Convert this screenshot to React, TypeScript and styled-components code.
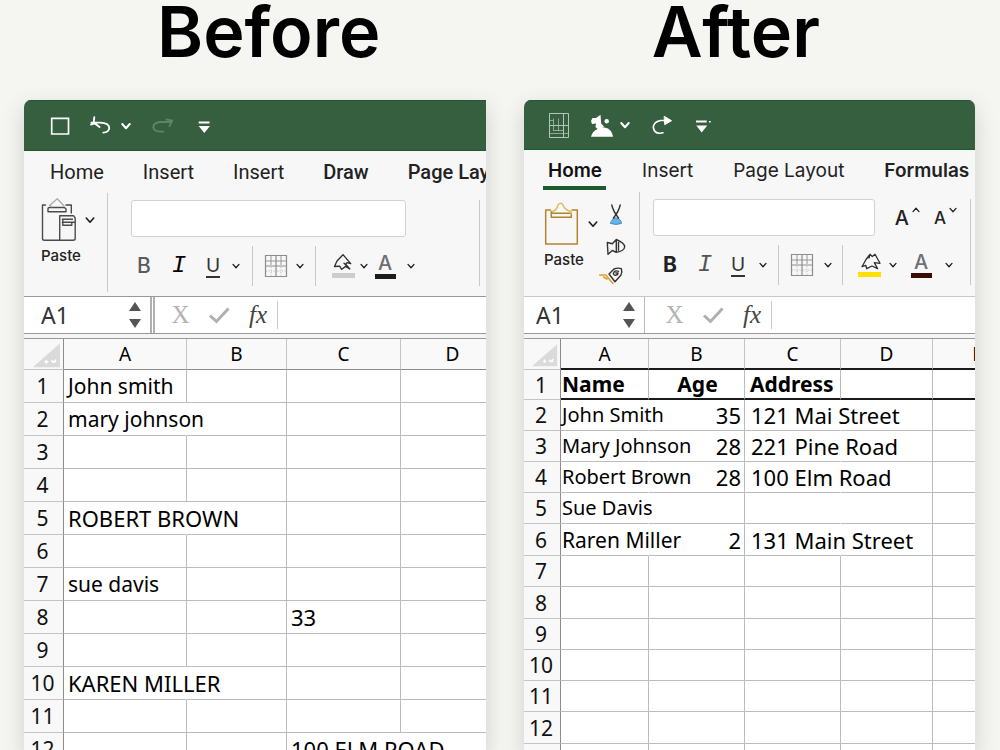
import React from "react";
import styled, { createGlobalStyle, css } from "styled-components";

const UI_FONT = `Inter, Roboto, "Liberation Sans", sans-serif`;
const CELL_FONT = `"Noto Sans", "Open Sans", sans-serif`;

const GlobalStyle = createGlobalStyle`
  *, *::before, *::after { box-sizing: border-box; }
  body { margin: 0; background: #f5f5f2; }
  button, input { font: inherit; color: inherit; margin: 0; padding: 0; border: 0; background: none; border-radius: 0; }
  svg { display: block; overflow: visible; }
`;

const Page = styled.main`
  height: 100vh;
  overflow: hidden;
  display: flex;
  flex-direction: column;
  background: #f5f5f2;
  font-family: ${UI_FONT};
  color: #1c1c1c;
`;

const Titles = styled.header`
  display: flex;
  justify-content: space-between;
  height: 100px;
  padding: 0 180px 0 157px;
`;

const Title = styled.h1`
  margin: 0;
  font-size: 70px;
  line-height: 64px;
  font-weight: 600;
  color: #000;
`;

const Panels = styled.div`
  flex: 1;
  min-height: 0;
  display: grid;
  grid-template-columns: 462fr 451fr;
  gap: 38px;
  padding: 0 25px 0 24px;
`;

const Window = styled.section<{ $cut?: boolean }>`
  min-width: 0;
  overflow: hidden;
  display: flex;
  flex-direction: column;
  background: #f5f5f5;
  border-radius: ${(p) => (p.$cut ? "7px 0 0 0" : "7px 7px 0 0")};
  box-shadow: 0 8px 22px rgba(60, 60, 50, 0.2);
`;

const QuickBar = styled.div<{ $cols: string; $pad: number; $h: number }>`
  flex: none;
  height: ${(p) => p.$h}px;
  display: grid;
  grid-template-columns: ${(p) => p.$cols};
  align-items: center;
  padding-left: ${(p) => p.$pad}px;
  background: #365f3f;
  border-top: 1px solid #1f5a2f;
  border-bottom: 1px solid #1f5a2f;
  color: #fff;
`;

const IconButton = styled.button`
  display: flex;
  align-items: center;
  cursor: pointer;
`;

const Ribbon = styled.div<{ $h: number }>`
  flex: none;
  height: ${(p) => p.$h}px;
  display: flex;
  flex-direction: column;
  background: #f7f7f7;
`;

const Tabs = styled.nav<{ $pad: number; $gap: number; $classic?: boolean }>`
  display: flex;
  gap: ${(p) => p.$gap}px;
  height: 42px;
  padding-left: ${(p) => p.$pad}px;
  white-space: nowrap;
  font-size: 19px;
  ${(p) => p.$classic && css`font-family: Roboto, sans-serif; font-size: 20px;`}
`;

const Tab = styled.a<{ $weight?: number; $active?: boolean }>`
  position: relative;
  line-height: 42px;
  font-weight: ${(p) => p.$weight ?? 400};
  color: #222;
  text-decoration: none;
  ${(p) =>
    p.$active &&
    css`
      color: #111;
      &::after {
        content: "";
        position: absolute;
        left: -5px;
        right: -4px;
        top: 36px;
        height: 4px;
        background: #1d5a2e;
      }
    `}
`;

const Groups = styled.div`
  flex: 1;
  display: flex;
`;

const Clipboard = styled.div<{ $w: number; $h: number }>`
  flex: none;
  width: ${(p) => p.$w}px;
  height: ${(p) => p.$h}px;
  display: flex;
  border-right: 1px solid #c9c9c9;
`;

const Paste = styled.div<{ $pad: number; $top: number }>`
  display: grid;
  grid-template-columns: 44px 10px;
  align-content: start;
  align-items: center;
  row-gap: 4px;
  padding: ${(p) => p.$top}px 0 0 ${(p) => p.$pad}px;
`;

const PasteLabel = styled.span`
  font-size: 15px;
  line-height: 20px;
  font-weight: 500;
  color: #222;
`;

const SideTools = styled.div`
  display: flex;
  flex-direction: column;
  align-items: center;
  gap: 12px;
  width: 36px;
  padding-top: 12px;
`;

const FontGroup = styled.div<{ $pad: number; $edge: number }>`
  flex: 1;
  min-width: 0;
  height: 86px;
  margin: 7px ${(p) => p.$edge}px 0 0;
  padding-left: ${(p) => p.$pad}px;
  border-right: 1px solid #c9c9c9;
`;

const FontRow = styled.div<{ $end: number }>`
  display: flex;
  align-items: center;
  height: 37px;
  padding-right: ${(p) => p.$end}px;
`;

const FontInput = styled.input`
  flex: 1;
  min-width: 0;
  height: 37px;
  background: #fff;
  border: 1px solid #d2d2d2;
  border-radius: 3px;
`;

const SizeButton = styled.button<{ $size: number; $gap: number }>`
  display: flex;
  align-items: flex-start;
  gap: 3px;
  margin-left: ${(p) => p.$gap}px;
  font-size: ${(p) => p.$size}px;
  line-height: 24px;
  font-weight: 500;
  color: #222;
`;

const ToolRow = styled.div<{ $cols: string }>`
  display: grid;
  grid-template-columns: ${(p) => p.$cols};
  justify-items: center;
  align-items: center;
  height: 40px;
  margin-top: 9px;
`;

const Tool = styled.button<{ $weight?: number; $italic?: boolean; $underline?: boolean; $color?: string }>`
  display: flex;
  justify-content: center;
  font-size: 21px;
  line-height: 22px;
  font-weight: ${(p) => p.$weight ?? 400};
  color: ${(p) => p.$color ?? "#333"};
  ${(p) => p.$italic && css`font-family: "Liberation Mono", monospace; font-style: italic; font-size: 24px;`}
  ${(p) => p.$underline && css`font-size: 19px; line-height: 21px; border-bottom: 2px solid currentColor;`}
`;

const ColorTool = styled.button<{ $bar: string }>`
  display: flex;
  justify-content: center;
  width: 21px;
  height: 26px;
  font-size: 20px;
  line-height: 20px;
  font-weight: 500;
  color: #6c6f73;
  border-bottom: 5px solid ${(p) => p.$bar};
`;

const Divider = styled.span`
  width: 1px;
  height: 40px;
  background: #c9c9c9;
`;

const FormulaRow = styled.div<{ $line: string }>`
  flex: none;
  display: flex;
  height: 38px;
  background: #fff;
  border-top: 1px solid ${(p) => p.$line};
  border-bottom: 1px solid #999;
`;

const NameBox = styled.div<{ $w: number; $pad: number; $double?: boolean }>`
  flex: none;
  width: ${(p) => p.$w}px;
  display: flex;
  align-items: center;
  justify-content: space-between;
  padding: 0 9px 0 ${(p) => p.$pad}px;
  border-right: ${(p) => (p.$double ? "5px double #b0b0b0" : "1px solid #bbb")};
`;

const NameInput = styled.input`
  width: 60px;
  font-family: ${CELL_FONT};
  font-size: 23px;
  line-height: 32px;
  color: #333;
`;

const Spinner = styled.div`
  display: flex;
  flex-direction: column;
  gap: 8px;
`;

const FormulaTools = styled.div<{ $pad: number }>`
  display: grid;
  grid-template-columns: 39px 39px 38px;
  justify-items: center;
  align-items: center;
  margin: 4px 0;
  padding-left: ${(p) => p.$pad}px;
  border-right: 1px solid #c9c9c9;
  font-family: "Liberation Serif", serif;
`;

const Cancel = styled.button`
  font-size: 25px;
  line-height: 28px;
  color: #b3b3b3;
`;

const Fx = styled.button`
  font-size: 25px;
  line-height: 28px;
  font-style: italic;
  color: #444;
`;

const FormulaInput = styled.input`
  flex: 1;
  min-width: 0;
`;

const Grid = styled.div`
  flex: 1;
  min-height: 0;
  overflow: hidden;
  margin-top: 4px;
  background: #fff;
  border-top: 1px solid #999;
`;

const Sheet = styled.table<{ $extra: number }>`
  width: calc(100% + ${(p) => p.$extra}px);
  table-layout: fixed;
  border-collapse: separate;
  border-spacing: 0;
  font-family: ${CELL_FONT};
  color: #000;
`;

const RowHead = styled.th`
  padding: 0 2px 0 0;
  background: #f8f8f8;
  border-right: 1px solid #8c8c8c;
  border-bottom: 1px solid #c4c4c4;
  font-size: 21px;
  line-height: 24px;
  font-weight: 400;
  color: #111;
`;

const ColHead = styled.th<{ $strong?: boolean }>`
  height: 31px;
  padding: 0;
  background: #f9f9f9;
  border-right: 1px solid #c4c4c4;
  border-bottom: ${(p) => (p.$strong ? "2px solid #1a1a1a" : "1px solid #8c8c8c")};
  font-size: 19px;
  line-height: 24px;
  font-weight: 400;
`;

const Corner = styled(RowHead)`
  height: 31px;
  vertical-align: bottom;
`;

const Row = styled.tr<{ $h: number }>`
  height: ${(p) => p.$h}px;
`;

type CellStyle = { $size: number; $pad: number; $open?: boolean; $align?: string; $head?: boolean };

const Cell = styled.td<CellStyle>`
  padding: 0 3px 0 ${(p) => p.$pad}px;
  border-right: 1px solid ${(p) => (p.$open ? "transparent" : "#bcbcbc")};
  border-bottom: ${(p) => (p.$head ? "2px solid #1a1a1a" : "1px solid #bcbcbc")};
  font-size: ${(p) => p.$size}px;
  line-height: 26px;
  font-weight: ${(p) => (p.$head ? 700 : 400)};
  text-align: ${(p) => p.$align ?? "left"};
  white-space: nowrap;
`;

const stroke = { fill: "none", stroke: "currentColor", strokeLinecap: "round", strokeLinejoin: "round" } as const;

const Chevron = ({ up, heavy, size = 8 }: { up?: boolean; heavy?: boolean; size?: number }) => (
  <svg width={size} height={size} viewBox="0 0 8 8" {...stroke} strokeWidth={heavy ? 1.6 : 1.3}>
    <path d={up ? "M1 5.6 4 2.2 7 5.6" : "M1 2.4 4 5.8 7 2.4"} />
  </svg>
);

const Borders = () => (
  <svg width="22" height="22" viewBox="0 0 22 22" fill="none" stroke="#8d8d8d">
    <path d="M.5.5H21.5V21.5H.5ZM.5 11H21.5M11 .5V21.5" strokeWidth="1.2" />
    <path d="M1 6H21M6 1V10M16 1V10" strokeWidth=".9" />
    <path d="M1 16H10M12 16H21M6 12V21M16 12V21" strokeWidth=".6" strokeDasharray="1 1.5" />
  </svg>
);

const Fill = ({ bright }: { bright?: boolean }) => (
  <svg width="24" height="26" viewBox="0 0 24 26" {...stroke} color="#2d2d2d" strokeWidth="1.3">
    {bright ? (
      <path d="M5 14.7 9 7.5 13 2.3 15.3 4.6 18 2.3 23 11.3 17.3 10.6 20.7 16.7 15 14 9.7 16.7 8.8 13.4Z M13 2.3 12 6" />
    ) : (
      <path d="M3.5 13.5 6 8 12 1.7 19.7 10.7 16 9.6 14.6 11.2 18.8 16 14.7 13.4 10.7 16.3 8.6 13.2 3.5 13.5 M13 10.2 16 13" />
    )}
    <rect x="1" y="20" width="23" height="5" fill={bright ? "#ffe000" : "#cdcdcd"} stroke="none" />
  </svg>
);

const PasteCopy = () => (
  <svg width="38" height="45" viewBox="0 0 38 45" {...stroke} color="#4b4b4b" strokeWidth="1.4">
    <path d="M4.5 8H1.5V41.5Q1.5 43.3 3.5 43.3H18.7M25 8H30.3V16M18.7 43.3V18.7H32.5L34.2 21V41.5Q34.2 43.3 32 43.3Z" />
    <path d="M7 14.7V11.5Q7 10.5 8.5 10.5H23.5L25 12V14.7Z" />
    <path d="M11 9.8 8.5 8.5 16.3 1.7 23 9" stroke="#adadad" />
    <path d="M21.3 22.3H31.5M21.3 25.2H34M21.8 22.3V28.3H30.8V25.2" />
  </svg>
);

const PasteBoard = () => (
  <svg width="36" height="45" viewBox="0 0 36 45" {...stroke} color="#b4842d" strokeWidth="1.5">
    <path d="M6.5 9H1.7V43H33.3V9H28" />
    <path d="M7.3 16.3V10.5L9 12.3H27.3V16.3Z" />
    <path d="M8.5 10.5Q13 9 14 4Q16.7.5 19 4Q20.5 9 27 10.5V13" stroke="#e2bd63" />
  </svg>
);

const Scissors = () => (
  <svg width="14" height="22" viewBox="0 0 14 22" {...stroke} color="#333" strokeWidth="1.4">
    <path d="M2.5 17 4.8 14H9.2L12 17 12.4 19.5Q7 21.5 1.6 19.5Z" fill="#67b4ea" stroke="#3b7ba8" strokeWidth=".8" />
    <path d="M2.8 1Q4 7 9.5 14M11.2 1Q10 7 4.5 14" />
  </svg>
);

const CopyIcon = () => (
  <svg width="20" height="18" viewBox="0 0 20 18" {...stroke} color="#333" strokeWidth="1.4">
    <path d="M1.3 4.5 6.3 5.8 10.3 1.5V14.3L6.3 12.5 2 16.3ZM10.3 1.5Q18.7 5 18.7 9Q18 13.2 10.3 14.3M12.5 4.5V12.2" />
  </svg>
);

const Brush = () => (
  <svg width="34" height="19" viewBox="0 0 34 19" {...stroke} color="#333" strokeWidth="1.4">
    <path d="M.7 7H6.7L14 15.5M4.5 9 8 11" stroke="#dfa12f" strokeWidth="1.6" />
    <path d="M10 6 15 1Q19 -.5 22.3 .7Q23.5 4 22 7L16 13.7ZM19.5 3.3Q15.5 1.8 14.3 5.6Q15.5 8.6 18.7 6.4L19 5H16.8" />
  </svg>
);

const Triangle = ({ down }: { down?: boolean }) => (
  <svg width="12" height="9" viewBox="0 0 12 9" fill="#555">
    <path d={down ? "M0 0H12L6 9Z" : "M0 9H12L6 0Z"} />
  </svg>
);

const Check = () => (
  <svg width="21" height="17" viewBox="0 0 21 17" fill="none" stroke="#b0b0b0" strokeWidth="3">
    <path d="M1 8.5 7.5 14.5 19.5 1.5" />
  </svg>
);

const CornerMark = ({ short }: { short?: boolean }) => (
  <svg width={short ? 34 : 37} height="27" viewBox="0 0 38 27">
    <path d="M9 25.5 37 1V25.5Z" fill="#dadada" />
    <path d="M21 20H25M23 18V22M28 18.5 30 20.5 33 17.5M29 20H33" stroke="#fff" strokeWidth="1.5" fill="none" />
  </svg>
);

const BeforeQuick = () => (
  <QuickBar $cols="39px 32px 31px 45px 14px" $pad={26} $h={51}>
    <IconButton aria-label="Save">
      <svg width="20" height="20" viewBox="0 0 20 20" fill="none" stroke="#fff" strokeWidth="1.7"><path d="M1.7 2.3H18.5V18H1.7Z" /></svg>
    </IconButton>
    <IconButton aria-label="Undo">
      <svg width="22" height="22" viewBox="0 0 22 22" {...stroke} strokeWidth="1.9">
        <path d="M2.5 7.6H11Q20.3 8 20.3 13Q19.7 17.6 14.3 17.6M5.3 2.2 4.7 7.5 10.5 12M2 9.5 6 8" />
      </svg>
    </IconButton>
    <IconButton aria-label="Undo history"><Chevron heavy size={10} /></IconButton>
    <IconButton aria-label="Redo">
      <svg width="22" height="22" viewBox="0 0 22 22" {...stroke} stroke="#5f8467" strokeWidth="1.8">
        <path d="M19 7H8Q1.3 7.7 1.3 12.3Q2 17 11.3 16.7M14.5 4.5 20.3 5.7 17.5 11" />
      </svg>
    </IconButton>
    <IconButton aria-label="Customize toolbar">
      <svg width="14" height="22" viewBox="0 0 14 22" fill="#fff"><path d="M1.7 6.5H12.5V8.5H1.7ZM1.7 11H13L7.3 18Z" /></svg>
    </IconButton>
  </QuickBar>
);

const AfterQuick = () => (
  <QuickBar $cols="42px 30px 32px 43px 18px" $pad={24} $h={50}>
    <IconButton aria-label="Sheet">
      <svg width="22" height="26" viewBox="0 0 22 26" fill="none" stroke="#b4c6b8" strokeWidth="1">
        <path d="M1.5 1.5H20.5V25.5H1.5ZM1.5 13.5H20.5M15.5 1.5V25.5" />
        <path d="M5.5 6.5V19M10.5 6.5V19M1.5 8.5H5.5M5.5 18.5H15.5M2 21.5H20" strokeOpacity=".7" />
      </svg>
    </IconButton>
    <IconButton aria-label="Share">
      <svg width="24" height="24" viewBox="0 0 24 24" fill="#fff">
        <path d="M1 23.7Q2.5 18 7.5 16.3L10 14Q15 14 18 15.5Q22 18 23 23.7Z" />
        <path d="M1 8 2.5 5H6L10.5 1.7 11.2 10.5 14 13.5 8.5 17 5.5 14 6 10.5 2 11Z" />
        <circle cx="16.7" cy="8.2" r="2.2" />
      </svg>
    </IconButton>
    <IconButton aria-label="Share options"><Chevron heavy size={10} /></IconButton>
    <IconButton aria-label="Redo">
      <svg width="22" height="22" viewBox="0 0 22 22" {...stroke} strokeWidth="1.6">
        <path d="M13 6.5H8.5Q1.5 8 1.3 13.5Q2.3 19.5 8 19.2L11 18.7" />
        <path d="M12.5 2.5 19.5 6.7 13 10.5Z" fill="#fff" strokeWidth="1" />
      </svg>
    </IconButton>
    <IconButton aria-label="Customize toolbar">
      <svg width="18" height="22" viewBox="0 0 18 22" fill="#fff"><path d="M1 6.5H11.7V8.5H1ZM1.3 11.5H12.2L6.7 18.5ZM14 7H15.7V8.5H14Z" /></svg>
    </IconButton>
  </QuickBar>
);

const Tools = ({ cols, after }: { cols: string; after?: boolean }) => (
  <ToolRow $cols={cols}>
    <Tool aria-label="Bold" $weight={after ? 700 : 500} $color={after ? "#222" : "#5a5a5a"}>B</Tool>
    <Tool aria-label="Italic" $italic $color={after ? "#555" : "#000"}>I</Tool>
    <Tool aria-label="Underline" $underline>U</Tool>
    <IconButton aria-label="Underline options"><Chevron /></IconButton>
    <Divider />
    <IconButton aria-label="Borders"><Borders /></IconButton>
    <IconButton aria-label="Border options"><Chevron /></IconButton>
    <Divider />
    <IconButton aria-label="Fill color"><Fill bright={after} /></IconButton>
    <IconButton aria-label="Fill options"><Chevron /></IconButton>
    <ColorTool aria-label="Font color" $bar={after ? "#3a0a06" : "#1c1c1c"}>A</ColorTool>
    <IconButton aria-label="Font color options"><Chevron /></IconButton>
  </ToolRow>
);

const FormulaBar = ({ after }: { after?: boolean }) => (
  <FormulaRow $line={after ? "#c8c8c8" : "#999"}>
    <NameBox $w={after ? 121 : 131} $pad={after ? 12 : 17} $double={!after}>
      <NameInput aria-label="Name box" defaultValue="A1" />
      <Spinner>
        <IconButton aria-label="Previous cell"><Triangle /></IconButton>
        <IconButton aria-label="Next cell"><Triangle down /></IconButton>
      </Spinner>
    </NameBox>
    <FormulaTools $pad={after ? 10 : 6}>
      <Cancel aria-label="Cancel">X</Cancel>
      <IconButton aria-label="Enter"><Check /></IconButton>
      <Fx aria-label="Insert function">fx</Fx>
    </FormulaTools>
    <FormulaInput aria-label="Formula" />
  </FormulaRow>
);

type CellData = { text?: string; size?: number; pad?: number; open?: boolean; align?: string };
type RowData = { n?: number; h: number; head?: boolean; cells: CellData[] };

const e: CellData = {};
const open: CellData = { open: true };
const left = (text: string, size = 21, isOpen = false): CellData => ({ text, size, pad: 4, open: isOpen });

const beforeRows: RowData[] = [
  [left("John smith"), e, e, e],
  [left("mary johnson", 21, true), e, e, e],
  [e, e, e, e],
  [e, e, e, e],
  [left("ROBERT BROWN", 22, true), e, e, e],
  [e, e, e, e],
  [left("sue davis"), e, e, e],
  [e, e, left("33", 22), e],
  [e, e, e, e],
  [left("KAREN MILLER", 22, true), e, e, e],
  [e, e, e, e],
  [e, e, left("100 ELM ROAD", 22, true), e],
].map((cells, i) => ({ n: i + 1, h: 33, cells }));

const person = (name: string, age: string, address: string, size = 20): CellData[] => [
  { text: name, size, pad: 1, open: true },
  { text: age, size: 22, align: "right" },
  { text: address, size: 22, pad: 6, open: true },
  e,
  e,
];

const blank = [e, e, e, e, e];

const afterRows: RowData[] = [
  {
    n: 1, h: 30, head: true,
    cells: [{ text: "Name", pad: 1 }, { text: "Age", pad: 5, align: "center" }, { text: "Address", pad: 5 }, e, e],
  },
  { n: 2, h: 31, cells: person("John Smith", "35", "121 Mai Street") },
  { n: 3, h: 31, cells: person("Mary Johnson", "28", "221 Pine Road") },
  { n: 4, h: 31, cells: person("Robert Brown", "28", "100 Elm Road") },
  { n: 5, h: 31, cells: [{ text: "Sue Davis", size: 20, pad: 1, open: true }, e, open, e, e] },
  { n: 6, h: 32, cells: person("Raren Miller", "2", "131 Main Street", 21) },
  { n: 7, h: 31, cells: blank },
  { n: 8, h: 32, cells: blank },
  { n: 9, h: 31, cells: blank },
  { n: 10, h: 31, cells: blank },
  { n: 11, h: 31, cells: blank },
  { n: 12, h: 32, cells: blank },
  { h: 31, cells: blank },
];

const SheetTable = ({ label, widths, extra, letters, rows, strong }: {
  label: string; widths: number[]; extra: number; letters: string[]; rows: RowData[]; strong?: boolean;
}) => (
  <Grid>
    <Sheet aria-label={label} $extra={extra}>
      <colgroup>
        {widths.map((w, i) => <col key={i} width={w} />)}
        <col />
      </colgroup>
      <thead>
        <tr>
          <Corner><CornerMark short={strong} /></Corner>
          {letters.map((l) => <ColHead key={l} scope="col" $strong={strong}>{l}</ColHead>)}
        </tr>
      </thead>
      <tbody>
        {rows.map((r, i) => (
          <Row key={i} $h={r.h}>
            <RowHead scope="row">{r.n}</RowHead>
            {r.cells.map((c, j) => (
              <Cell key={j} $size={c.size ?? 21} $pad={c.pad ?? 0} $open={c.open} $align={c.align} $head={r.head}>
                {c.text}
              </Cell>
            ))}
          </Row>
        ))}
      </tbody>
    </Sheet>
  </Grid>
);

export default function App() {
  return (
    <Page>
      <GlobalStyle />
      <Titles>
        <Title>Before</Title>
        <Title>After</Title>
      </Titles>
      <Panels>
        <Window $cut aria-label="Before">
          <BeforeQuick />
          <Ribbon $h={145}>
            <Tabs $pad={26} $gap={39} $classic>
              <Tab href="#home">Home</Tab>
              <Tab href="#insert">Insert</Tab>
              <Tab href="#insert-2">Insert</Tab>
              <Tab href="#draw" $weight={500}>Draw</Tab>
              <Tab href="#layout" $weight={500}>Page Layout</Tab>
            </Tabs>
            <Groups>
              <Clipboard $w={84} $h={99}>
                <Paste $pad={17} $top={4}>
                  <IconButton aria-label="Paste"><PasteCopy /></IconButton>
                  <IconButton aria-label="Paste options"><Chevron size={10} /></IconButton>
                  <PasteLabel>Paste</PasteLabel>
                </Paste>
              </Clipboard>
              <FontGroup $pad={23} $edge={6}>
                <FontRow $end={73}><FontInput aria-label="Font" /></FontRow>
                <Tools cols="26px 44px 24px 22px 10px 38px 10px 20px 36px 6px 36px 16px" />
              </FontGroup>
            </Groups>
          </Ribbon>
          <FormulaBar />
          <SheetTable
            label="Before cleanup"
            widths={[40, 123, 100, 114]}
            extra={19}
            letters={["A", "B", "C", "D"]}
            rows={beforeRows}
          />
        </Window>
        <Window aria-label="After">
          <AfterQuick />
          <Ribbon $h={146}>
            <Tabs $pad={24} $gap={40}>
              <Tab href="#home" $weight={600} $active>Home</Tab>
              <Tab href="#insert">Insert</Tab>
              <Tab href="#layout">Page Layout</Tab>
              <Tab href="#formulas" $weight={600}>Formulas</Tab>
            </Tabs>
            <Groups>
              <Clipboard $w={116} $h={88}>
                <Paste $pad={20} $top={9}>
                  <IconButton aria-label="Paste"><PasteBoard /></IconButton>
                  <IconButton aria-label="Paste options"><Chevron size={10} /></IconButton>
                  <PasteLabel>Paste</PasteLabel>
                </Paste>
                <SideTools>
                  <IconButton aria-label="Cut"><Scissors /></IconButton>
                  <IconButton aria-label="Copy"><CopyIcon /></IconButton>
                  <IconButton aria-label="Format painter"><Brush /></IconButton>
                </SideTools>
              </Clipboard>
              <FontGroup $pad={13} $edge={4}>
                <FontRow $end={13}>
                  <FontInput aria-label="Font" />
                  <SizeButton aria-label="Increase font size" $size={20} $gap={20}>A<Chevron up /></SizeButton>
                  <SizeButton aria-label="Decrease font size" $size={17} $gap={14}>A<Chevron /></SizeButton>
                </FontRow>
                <Tools after cols="34px 36px 30px 20px 10px 38px 14px 14px 40px 8px 48px 8px" />
              </FontGroup>
            </Groups>
          </Ribbon>
          <FormulaBar after />
          <SheetTable
            strong
            label="After cleanup"
            widths={[37, 88, 96, 96, 92]}
            extra={48}
            letters={["A", "B", "C", "D", "E"]}
            rows={afterRows}
          />
        </Window>
      </Panels>
    </Page>
  );
}
